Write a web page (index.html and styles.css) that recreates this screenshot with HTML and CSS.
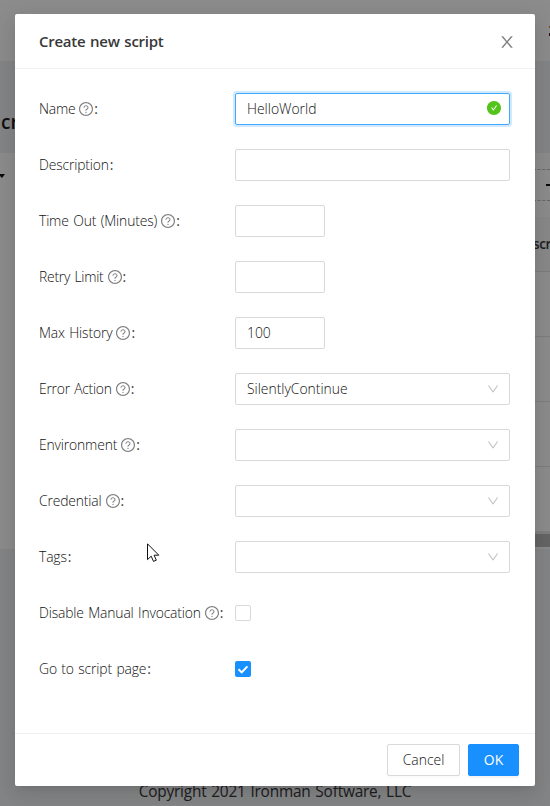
FILE: index.html
```
<!DOCTYPE html>
<html lang="en">
<head>
<meta charset="utf-8">
<title>Create new script</title>
<link rel="stylesheet" href="styles.css">
</head>
<body>
<svg class="defs" width="0" height="0">
  <symbol id="question" viewBox="64 64 896 896"><path d="M512 64C264.6 64 64 264.6 64 512s200.6 448 448 448 448-200.6 448-448S759.4 64 512 64zm0 820c-205.4 0-372-166.6-372-372s166.6-372 372-372 372 166.6 372 372-166.6 372-372 372z"/><path d="M623.6 316.7C593.6 290.4 554 276 512 276s-81.6 14.5-111.6 40.7C369.2 344 352 380.7 352 420v7.6c0 4.4 3.6 8 8 8h48c4.4 0 8-3.6 8-8V420c0-44.1 43.1-80 96-80s96 35.9 96 80c0 31.1-22 59.6-56.1 72.7-21.2 8.1-39.2 22.3-52.1 40.9-13.1 19-19.9 41.8-19.9 64.9V620c0 4.4 3.6 8 8 8h48c4.4 0 8-3.6 8-8v-22.7a48.3 48.3 0 0130.9-44.8c59-22.7 97.1-74.7 97.1-132.5.1-39.3-17.1-76-48.3-103.3zM472 732a40 40 0 1080 0 40 40 0 10-80 0z"/></symbol>
  <symbol id="down" viewBox="64 64 896 896"><path d="M884 256h-75c-5.1 0-9.9 2.5-12.9 6.6L512 654.2 227.9 262.6c-3-4.1-7.8-6.6-12.9-6.6h-75c-6.5 0-10.3 7.4-6.5 12.7l352.6 486.1c12.8 17.6 39 17.6 51.7 0l352.6-486.1c3.9-5.3.1-12.7-6.4-12.7z"/></symbol>
  <symbol id="close" viewBox="64 64 896 896"><path d="M563.8 512l262.5-312.9c4.4-5.2.7-13.1-6.1-13.1h-79.8c-4.7 0-9.2 2.1-12.3 5.7L511.6 449.8 295.1 191.7c-3-3.6-7.5-5.7-12.3-5.7H203c-6.8 0-10.5 7.9-6.1 13.1L459.4 512 196.9 824.9A7.95 7.95 0 00203 838h79.8c4.7 0 9.2-2.1 12.3-5.7l216.5-258.1 216.5 258.1c3 3.6 7.5 5.7 12.3 5.7h79.8c6.8 0 10.5-7.9 6.1-13.1L563.8 512z"/></symbol>
  <symbol id="success" viewBox="64 64 896 896"><path d="M512 64C264.6 64 64 264.6 64 512s200.6 448 448 448 448-200.6 448-448S759.4 64 512 64zm193.5 301.7l-210.6 292a31.8 31.8 0 01-51.7 0L318.5 484.9c-3.8-5.3 0-12.7 6.5-12.7h46.9c10.2 0 19.9 4.9 25.9 13.3l71.2 98.8 157.2-218c6-8.3 15.6-13.3 25.9-13.3H699c6.5 0 10.3 7.4 6.5 12.7z"/></symbol>
</svg>

<div class="page">
  <div class="topbar"><span class="avatar"></span></div>
  <div class="page-head"><span class="page-title">cr</span></div>
  <div class="content">
    <span class="caret"></span>
    <div class="table">
      <div class="add-button"><span class="plus"></span></div>
      <div class="table-head">scr</div>
      <div class="table-row"></div>
      <div class="table-row"></div>
      <div class="table-row"></div>
      <div class="table-row last"></div>
      <div class="track"></div>
      <div class="thumb"></div>
    </div>
  </div>
  <div class="page-foot">Copyright 2021 Ironman Software, LLC</div>
</div>

<div class="mask">
  <div class="modal">
    <div class="modal-head">
      <span class="modal-title">Create new script</span>
      <svg class="close"><use href="#close"/></svg>
    </div>
    <div class="modal-body">
      <div class="row"><div class="label"><span class="name">Name</span><svg class="help"><use href="#question"/></svg><i>:</i></div><div class="field focused"><span>HelloWorld</span><svg class="ok-icon"><use href="#success"/></svg></div></div>
      <div class="row"><div class="label"><span class="description">Description</span><i>:</i></div><div class="field"></div></div>
      <div class="row"><div class="label"><span class="timeout">Time Out (Minutes)</span><svg class="help"><use href="#question"/></svg><i>:</i></div><div class="field short"></div></div>
      <div class="row"><div class="label"><span class="retry">Retry Limit</span><svg class="help"><use href="#question"/></svg><i>:</i></div><div class="field short"></div></div>
      <div class="row"><div class="label"><span class="history">Max History</span><svg class="help"><use href="#question"/></svg><i>:</i></div><div class="field short"><span>100</span></div></div>
      <div class="row"><div class="label"><span class="error">Error Action</span><svg class="help"><use href="#question"/></svg><i>:</i></div><div class="field"><span class="value">SilentlyContinue</span><svg class="arrow"><use href="#down"/></svg></div></div>
      <div class="row"><div class="label"><span class="environment">Environment</span><svg class="help"><use href="#question"/></svg><i>:</i></div><div class="field"><svg class="arrow"><use href="#down"/></svg></div></div>
      <div class="row"><div class="label"><span class="credential">Credential</span><svg class="help"><use href="#question"/></svg><i>:</i></div><div class="field"><svg class="arrow"><use href="#down"/></svg></div></div>
      <div class="row"><div class="label"><span class="tags">Tags</span><i>:</i></div><div class="field"><svg class="arrow"><use href="#down"/></svg></div></div>
      <div class="row"><div class="label"><span class="disable">Disable Manual Invocation</span><svg class="help"><use href="#question"/></svg><i>:</i></div><div class="checkbox"></div></div>
      <div class="row"><div class="label"><span class="goto">Go to script page</span><i>:</i></div><div class="checkbox checked"><svg viewBox="0 0 16 16"><path d="M3.5 8.3 6.7 11.4 12.4 5.4"/></svg></div></div>
    </div>
    <div class="modal-foot">
      <div class="button">Cancel</div>
      <div class="button primary">OK</div>
    </div>
  </div>
</div>
<svg class="cursor" viewBox="0 0 13 20"><path d="M.5.8V16.6L4.2 13.2 6.5 18.4 9.3 17.2 7.1 12.2H11.8Z"/></svg>
</body>
</html>
```
FILE: styles.css
```
* { box-sizing: border-box; }
body {
  margin: 0;
  width: 550px;
  height: 806px;
  overflow: hidden;
  font: 300 13.9px/22px "Open Sans", "Noto Sans", sans-serif;
  color: #111;
  position: relative;
}
.defs { position: absolute; }
svg { fill: currentColor; flex: none; }

/* page behind the dialog */
.page { height: 806px; display: flex; flex-direction: column; background: #f0f2f5; color: #222; }
.topbar { height: 61px; background: #fff; display: flex; justify-content: flex-end; padding-top: 26px; }
.avatar { width: 1px; height: 10px; background: linear-gradient(#c98a30 20%, #fff 20% 70%, #501030 70%); }
.page-head { height: 92px; padding: 45px 0 0 1px; }
.page-title { font-size: 19px; font-weight: 600; line-height: 32px; }
.content { height: 396px; background: #fff; display: flex; justify-content: space-between; }
.caret { margin-top: 21px; width: 5px; height: 4px; background: #111; clip-path: polygon(0 0, 100% 0, 40% 100%, 0 50%); }
.table { width: 17px; padding-top: 16px; display: flex; flex-direction: column; }
.add-button { height: 32px; border: dashed #bbb; border-width: 1px 0; padding: 14px 0 0 13px; }
.plus { display: block; height: 2px; background: #111; }
.table-head { margin-top: 16px; height: 55px; flex: none; background: #fafafa; border-bottom: 1px solid #e4e4e4; line-height: 54px; font-size: 13.5px; font-weight: 600; letter-spacing: -.4px; color: #383838; }
.table-row { height: 65px; flex: none; border-bottom: 1px solid #e4e4e4; }
.table-row.last { height: 64px; border: 0; }
.track { height: 3px; background: #e8e8e8; }
.thumb { height: 13px; background: #b9b9b9; }
.page-foot { flex: 1; padding-top: 231px; text-align: center; font-weight: 400; font-size: 15.4px; line-height: 24px; letter-spacing: -.2px; word-spacing: 1px; color: #383838; }

/* dialog */
.mask { position: absolute; inset: 0; background: rgba(0,0,0,.45); padding: 14px 15px; }
.modal { width: 520px; height: 772px; background: #fff; border-radius: 2px; box-shadow: 0 3px 6px -4px rgba(0,0,0,.12), 0 6px 16px rgba(0,0,0,.08), 0 9px 28px 8px rgba(0,0,0,.05); }
.modal-head { height: 55px; border-bottom: 1px solid #f0f0f0; padding: 0 20px 0 24px; display: flex; align-items: center; justify-content: space-between; }
.modal-title { font-size: 15px; font-weight: 600; color: #383838; letter-spacing: -.25px; word-spacing: 1px; }
.close { width: 16px; height: 16px; color: #808080; margin-top: 2px; }
.modal-body { padding: 24px 25px 24px 24px; }
.row { height: 32px; margin-bottom: 24px; display: flex; align-items: center; }
.label { width: 196px; display: flex; align-items: center; white-space: nowrap; }
.label span { letter-spacing: -.15px; word-spacing: 1px; }
.label .retry { letter-spacing: -.25px; }
.label .name, .label .error { letter-spacing: -.25px; }
.help { width: 14px; height: 14px; margin-left: 4px; color: #808080; }
.label i { font-style: normal; font-weight: 400; margin-left: 1px; color: #383838; }
.field { width: 275px; height: 32px; border: 1px solid #d9d9d9; border-radius: 2px; padding: 0 11px; display: flex; align-items: center; }
.field.short { width: 90px; }
.field.focused { border-color: #40a9ff; box-shadow: 0 0 0 2px rgba(24,144,255,.2); }
.ok-icon { width: 14px; height: 14px; color: #52c41a; margin: 0 -3px 2px auto; }
.arrow { width: 12px; height: 12px; color: #bfbfbf; margin: 0 -1px 0 auto; }
.checkbox { width: 16px; height: 16px; border: 1px solid #d9d9d9; border-radius: 2px; }
.checkbox.checked { border: 0; background: #1890ff; }
.checkbox svg { display: block; width: 16px; height: 16px; fill: none; stroke: #fff; stroke-width: 2; }
.modal-foot { border-top: 1px solid #f0f0f0; padding: 10px 16px; display: flex; justify-content: flex-end; gap: 8px; }
.button { width: 73px; height: 32px; border: 1px solid #d9d9d9; border-radius: 2px; display: flex; align-items: center; justify-content: center; box-shadow: 0 2px 0 rgba(0,0,0,.015); }
.button.primary { width: 51px; background: #1890ff; border-color: #1890ff; color: #fff; font-weight: 400; box-shadow: 0 2px 0 rgba(0,0,0,.045); }
.cursor { position: absolute; left: 147px; top: 543px; width: 13px; height: 20px; fill: #fff; stroke: #111; stroke-width: 1; }
```
